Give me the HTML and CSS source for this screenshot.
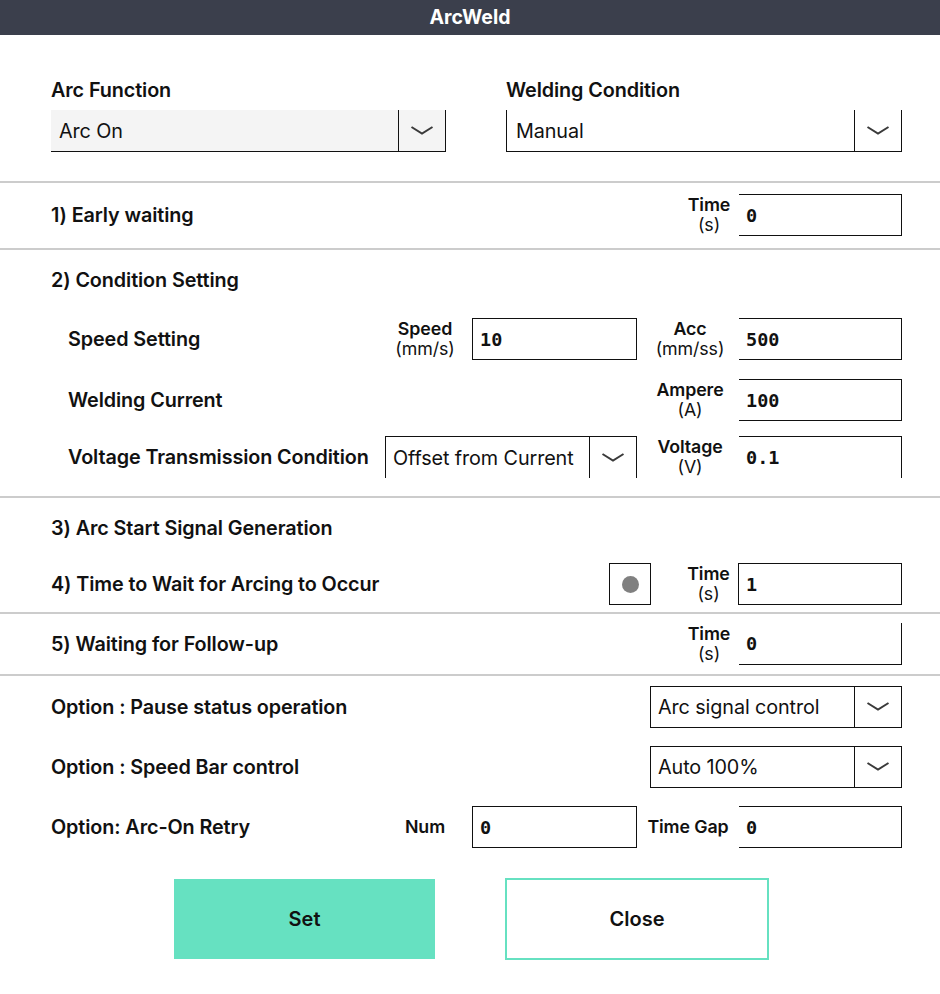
FILE: index.html
```html
<!DOCTYPE html>
<html lang="en">
<head>
<meta charset="utf-8">
<title>ArcWeld</title>
<link rel="stylesheet" href="styles.css">
</head>
<body>
<div class="titlebar">ArcWeld</div>

<section class="sec top">
  <div class="field">
    <div class="flabel">Arc Function</div>
    <div class="select sel-grey b-r b-b">
      <span class="val">Arc On</span>
      <span class="arrow"><svg width="24" height="10" viewBox="0 0 24 10"><polyline points="1.5,2 12,8.5 22.5,2" fill="none" stroke="#3a3a3a" stroke-width="2"/></svg></span>
    </div>
  </div>
  <div class="field">
    <div class="flabel">Welding Condition</div>
    <div class="select b-l b-r b-b">
      <span class="val pl10">Manual</span>
      <span class="arrow"><svg width="24" height="10" viewBox="0 0 24 10"><polyline points="1.5,2 12,8.5 22.5,2" fill="none" stroke="#3a3a3a" stroke-width="2"/></svg></span>
    </div>
  </div>
</section>
<div class="rule"></div>

<section class="sec s1">
  <div class="row">
    <div class="title">1) Early waiting</div>
    <div class="unit w60"><b>Time</b><span>(s)</span></div>
    <div class="input w163 b-t b-r b-b">0</div>
  </div>
</section>
<div class="rule"></div>

<section class="sec s2">
  <div class="title block mb27">2) Condition Setting</div>
  <div class="grid">
    <div class="sub">Speed Setting</div>
    <div class="unit pr7"><b>Speed</b><span>(mm/s)</span></div>
    <div class="input b-l b-t b-r b-b">10</div>
    <div class="unit pl4"><b>Acc</b><span>(mm/ss)</span></div>
    <div class="input b-t b-r b-b">500</div>
  </div>
  <div class="grid mt19">
    <div class="sub">Welding Current</div>
    <div class="unit pl4 c4"><b>Ampere</b><span>(A)</span></div>
    <div class="input b-t b-r b-b">100</div>
  </div>
  <div class="grid mt15">
    <div class="sub">Voltage Transmission Condition</div>
    <div class="select span2 b-l b-t b-r">
      <span class="val pl8">Offset from Current</span>
      <span class="arrow"><svg width="24" height="10" viewBox="0 0 24 10"><polyline points="1.5,2 12,8.5 22.5,2" fill="none" stroke="#3a3a3a" stroke-width="2"/></svg></span>
    </div>
    <div class="unit pl4"><b>Voltage</b><span>(V)</span></div>
    <div class="input b-t b-r">0.1</div>
  </div>
</section>
<div class="rule"></div>

<section class="sec s3">
  <div class="title block mb24">3) Arc Start Signal Generation</div>
  <div class="row">
    <div class="title">4) Time to Wait for Arcing to Occur</div>
    <div class="check"><span class="dot"></span></div>
    <div class="unit w59 ml28"><b>Time</b><span>(s)</span></div>
    <div class="input w164 b-l b-t b-r b-b">1</div>
  </div>
</section>
<div class="rule"></div>

<section class="sec s5">
  <div class="row">
    <div class="title">5) Waiting for Follow-up</div>
    <div class="unit w60"><b>Time</b><span>(s)</span></div>
    <div class="input w163 b-r b-b">0</div>
  </div>
</section>
<div class="rule"></div>

<section class="sec opts">
  <div class="row">
    <div class="title">Option : Pause status operation</div>
    <div class="select w252 b-l b-t b-r b-b">
      <span class="val pl8">Arc signal control</span>
      <span class="arrow"><svg width="24" height="10" viewBox="0 0 24 10"><polyline points="1.5,2 12,8.5 22.5,2" fill="none" stroke="#3a3a3a" stroke-width="2"/></svg></span>
    </div>
  </div>
  <div class="row mt18">
    <div class="title">Option : Speed Bar control</div>
    <div class="select w252 b-l b-t b-r b-b">
      <span class="val pl8">Auto 100%</span>
      <span class="arrow"><svg width="24" height="10" viewBox="0 0 24 10"><polyline points="1.5,2 12,8.5 22.5,2" fill="none" stroke="#3a3a3a" stroke-width="2"/></svg></span>
    </div>
  </div>
  <div class="grid mt18">
    <div class="title">Option: Arc-On Retry</div>
    <div class="unit pr7"><b>Num</b></div>
    <div class="input b-l b-t b-r b-b">0</div>
    <div class="unit"><b>Time Gap</b></div>
    <div class="input b-t b-r b-b">0</div>
  </div>
  <div class="btns">
    <button class="btn btn-set">Set</button>
    <button class="btn btn-close">Close</button>
  </div>
</section>
</body>
</html>
```

FILE: styles.css
```css
html, body {
  margin: 0;
  padding: 0;
  background: #ffffff;
}
body {
  width: 940px;
  font-family: Inter, "Noto Sans", "Liberation Sans", sans-serif;
  color: #111111;
}

.titlebar {
  height: 35px;
  background: #3b3f4c;
  color: #ffffff;
  font-weight: 700;
  font-size: 19.5px;
  line-height: 35px;
  text-align: center;
}

.sec {
  padding-left: 51px;
  padding-right: 38px;
}

.rule {
  height: 2px;
  background: #cccccc;
}

.top {
  display: grid;
  grid-template-columns: 395px 396px;
  column-gap: 60px;
  padding-top: 44px;
  padding-bottom: 29px;
}

.flabel {
  font-size: 19.8px;
  font-weight: 600;
  line-height: 22px;
  margin-bottom: 9px;
  letter-spacing: -0.1px;
}

.select {
  display: flex;
  height: 42px;
  box-sizing: border-box;
  font-size: 19.8px;
  letter-spacing: -0.1px;
  background: #ffffff;
}
.sel-grey { background: #f4f4f4; }
.select .val {
  flex: 1;
  display: flex;
  align-items: center;
  padding-left: 8px;
  white-space: nowrap;
}
.select .val.pl10 { padding-left: 9px; }
.select .val.pl8 { padding-left: 7px; }
.select .arrow {
  width: 47px;
  flex: none;
  border-left: 1px solid #111111;
  display: flex;
  align-items: center;
  justify-content: center;
  box-sizing: border-box;
}
.select .arrow svg { margin-top: -2px; }

.b-t { border-top: 1px solid #111111; }
.b-r { border-right: 1px solid #111111; }
.b-b { border-bottom: 1px solid #111111; }
.b-l { border-left: 1px solid #111111; }

.row {
  display: flex;
  align-items: center;
  height: 42px;
}

.title {
  flex: 1;
  font-size: 19.8px;
  font-weight: 600;
  line-height: 22px;
  letter-spacing: -0.1px;
  white-space: nowrap;
}
.title.block { flex: none; }

.sub {
  padding-left: 17px;
  font-size: 19.8px;
  font-weight: 600;
  line-height: 22px;
  letter-spacing: -0.1px;
  white-space: nowrap;
  align-self: center;
}

.unit {
  display: flex;
  flex-direction: column;
  align-items: center;
  justify-content: center;
  font-size: 17.8px;
  line-height: 20px;
  letter-spacing: -0.1px;
  white-space: nowrap;
}
.unit b { font-weight: 600; }

.input {
  height: 42px;
  box-sizing: border-box;
  display: flex;
  align-items: center;
  padding-left: 7px;
  font-family: "DejaVu Sans Mono", "Liberation Mono", monospace;
  font-weight: 700;
  font-size: 18.5px;
}

.w60 { width: 60px; }
.w59 { width: 59px; }
.w163 { width: 163px; }
.w164 { width: 164px; }
.w252 { width: 252px; flex: none; }
.ml28 { margin-left: 28px; }
.pr7 { padding-right: 7px; }
.pl4 { padding-left: 4px; }

.s1 { padding-top: 11px; padding-bottom: 12px; }

.s2 { padding-top: 19px; padding-bottom: 18px; }
.mb27 { margin-bottom: 27px; }
.mb24 { margin-bottom: 24px; }
.mt19 { margin-top: 19px; }
.mt15 { margin-top: 15px; }
.mt18 { margin-top: 18px; }

.grid {
  display: grid;
  grid-template-columns: 1fr 87px 165px 102px 163px;
  grid-template-rows: 42px;
  align-items: stretch;
}
.grid .c4 { grid-column: 4; }
.grid .span2 { grid-column: 2 / span 2; }
.grid .title { align-self: center; }

.s3 { padding-top: 19px; padding-bottom: 7px; }

.check {
  width: 42px;
  height: 42px;
  box-sizing: border-box;
  border: 1px solid #111111;
  display: flex;
  align-items: center;
  justify-content: center;
  flex: none;
}
.dot {
  width: 17px;
  height: 17px;
  border-radius: 50%;
  background: #808080;
}

.s5 { padding-top: 9px; padding-bottom: 9px; }

.opts { padding-top: 10px; padding-bottom: 34px; }

.btns {
  display: flex;
  justify-content: center;
  align-items: center;
  gap: 70px;
  height: 82px;
  margin-top: 30px;
  margin-left: -51px;
  margin-right: -38px;
  padding-left: 3px;
}
.btn {
  font-family: Inter, "Noto Sans", "Liberation Sans", sans-serif;
  font-size: 20px;
  font-weight: 600;
  color: #111111;
  cursor: pointer;
  padding: 0;
  border-radius: 0;
}
.btn-set {
  width: 261px;
  height: 80px;
  background: #66e1c1;
  border: none;
}
.btn-close {
  width: 264px;
  height: 82px;
  box-sizing: border-box;
  background: #ffffff;
  border: 2px solid #66e1c1;
}
```
